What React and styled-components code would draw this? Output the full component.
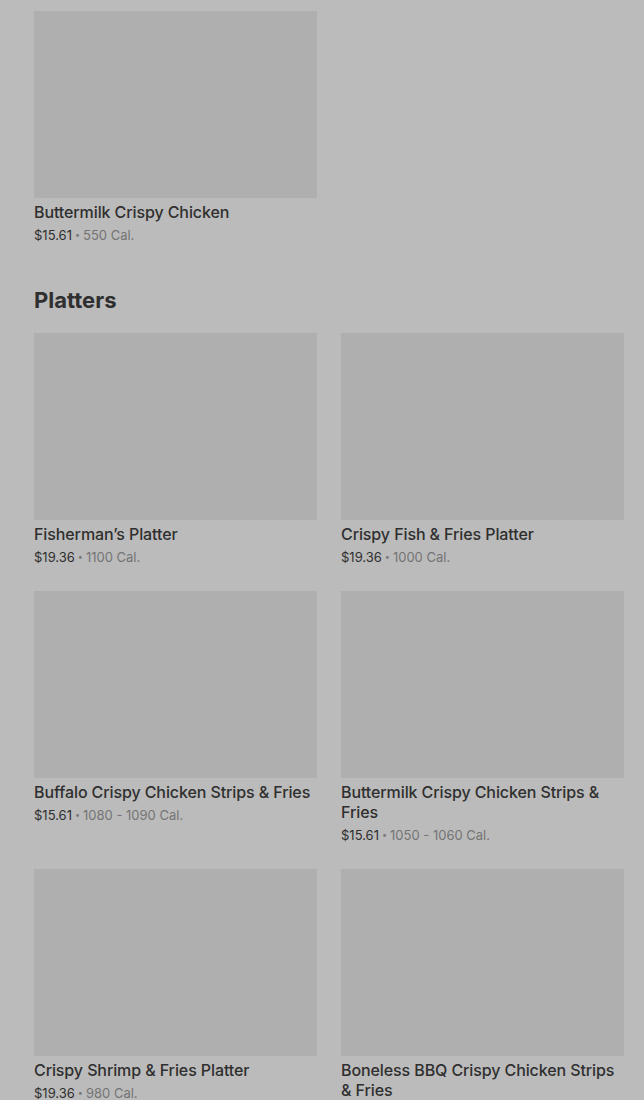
import styled, { createGlobalStyle } from "styled-components";

const GlobalStyle = createGlobalStyle`
  html, body {
    margin: 0;
    padding: 0;
    background: #bbbbbb;
  }
  body {
    font-family: Inter, "Noto Sans", sans-serif;
    color: #2f2f2f;
  }
`;

const sections = [
  {
    title: null,
    items: [{ name: "Buttermilk Crispy Chicken", price: "$15.61", cal: "550 Cal." }],
  },
  {
    title: "Platters",
    items: [
      { name: "Fisherman’s Platter", price: "$19.36", cal: "1100 Cal." },
      { name: "Crispy Fish & Fries Platter", price: "$19.36", cal: "1000 Cal." },
      { name: "Buffalo Crispy Chicken Strips & Fries", price: "$15.61", cal: "1080 - 1090 Cal." },
      { name: "Buttermilk Crispy Chicken Strips & Fries", price: "$15.61", cal: "1050 - 1060 Cal." },
      { name: "Crispy Shrimp & Fries Platter", price: "$19.36", cal: "980 Cal." },
      { name: "Boneless BBQ Crispy Chicken Strips & Fries", price: "$19.36", cal: "1210 Cal." },
    ],
  },
];

const App = () => {
  return (
    <Page>
      <GlobalStyle />
      {sections.map((section, i) => (
        <Section key={i}>
          {section.title && <Heading>{section.title}</Heading>}
          <Grid>
            {section.items.map((item) => (
              <Card key={item.name}>
                <Thumb />
                <Name>{item.name}</Name>
                <Meta>
                  <Price>{item.price}</Price>
                  <Dot>•</Dot>
                  <Cal>{item.cal}</Cal>
                </Meta>
              </Card>
            ))}
          </Grid>
        </Section>
      ))}
    </Page>
  );
};

export default App;

const Page = styled.div`
  padding: 11px 20px 0 34px;
  height: 1100px;
  overflow: hidden;
  box-sizing: border-box;
`;

const Section = styled.section`
  & + & {
    margin-top: 41px;
  }
`;

const Heading = styled.h2`
  margin: 0 0 19px;
  font-size: 22px;
  line-height: 28px;
  font-weight: 700;
  color: #2f2f2f;
`;

const Grid = styled.div`
  display: grid;
  grid-template-columns: 283px 283px;
  column-gap: 24px;
  row-gap: 24px;
  align-items: start;
`;

const Card = styled.div`
  display: flex;
  flex-direction: column;
`;

const Thumb = styled.div`
  height: 187px;
  background: #afafaf;
`;

const Name = styled.div`
  margin-top: 4px;
  font-size: 16px;
  line-height: 20px;
  font-weight: 500;
  letter-spacing: -0.1px;
  color: #2f2f2f;
`;

const Meta = styled.div`
  margin-top: 3px;
  font-size: 13px;
  line-height: 20px;
  display: flex;
  align-items: center;
`;

const Price = styled.span`
  color: #2f2f2f;
`;

const Dot = styled.span`
  color: #777;
  font-size: 9px;
  margin: 0 3px;
`;

const Cal = styled.span`
  color: #747474;
`;
